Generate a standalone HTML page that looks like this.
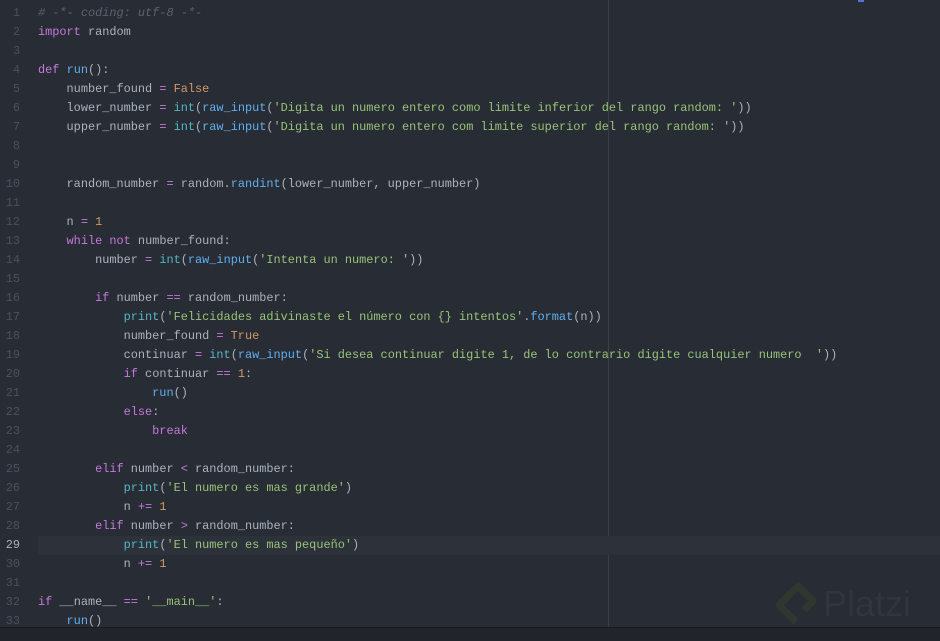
<!DOCTYPE html>
<html><head><meta charset="utf-8"><style>
html,body{margin:0;padding:0;width:940px;height:640px;overflow:hidden;background:#282c34}
.ed{position:absolute;left:0;top:4px;width:940px;font-family:"Liberation Mono",monospace;font-size:11.9px;color:#abb2bf}
.l{height:19px;line-height:19px;position:relative;white-space:pre}
.n{position:absolute;left:0;width:20px;text-align:right;color:#495162}
.c{position:absolute;left:38px}
.cur::before{content:"";position:absolute;left:38px;right:0;top:0;bottom:0;background:#2c313a}
.cur .n{color:#abb2bf}
.k{color:#c678dd}.f{color:#61afef}.b{color:#56b6c2}.s{color:#98c379}.o{color:#d19a66}.m{color:#5c6370;font-style:italic}.p{color:#c678dd}
.ruler{position:absolute;left:608px;top:0;width:1px;height:628px;background:#3b4048}
.bar{position:absolute;left:0;top:627px;width:940px;height:13px;background:#21252b;border-top:1px solid #181a1f}
.logo{position:absolute;color:#30353e;font-family:"Liberation Sans",sans-serif;font-size:36px}
</style></head><body>
<div class="ruler"></div>
<div style="position:absolute;left:858px;top:0;width:6px;height:2px;background:#4d78cc"></div>
<div class="ed">
<div class="l"><span class="n">1</span><span class="c m"># -*- coding: utf-8 -*-</span></div>
<div class="l"><span class="n">2</span><span class="c"><span class="k">import</span> random</span></div>
<div class="l"><span class="n">3</span></div>
<div class="l"><span class="n">4</span><span class="c"><span class="k">def</span> <span class="f">run</span>():</span></div>
<div class="l"><span class="n">5</span><span class="c">    number_found <span class="p">=</span> <span class="o">False</span></span></div>
<div class="l"><span class="n">6</span><span class="c">    lower_number <span class="p">=</span> <span class="b">int</span>(<span class="f">raw_input</span>(<span class="s">'Digita un numero entero como limite inferior del rango random: '</span>))</span></div>
<div class="l"><span class="n">7</span><span class="c">    upper_number <span class="p">=</span> <span class="b">int</span>(<span class="f">raw_input</span>(<span class="s">'Digita un numero entero com limite superior del rango random: '</span>))</span></div>
<div class="l"><span class="n">8</span></div>
<div class="l"><span class="n">9</span></div>
<div class="l"><span class="n">10</span><span class="c">    random_number <span class="p">=</span> random.<span class="f">randint</span>(lower_number, upper_number)</span></div>
<div class="l"><span class="n">11</span></div>
<div class="l"><span class="n">12</span><span class="c">    n <span class="p">=</span> <span class="o">1</span></span></div>
<div class="l"><span class="n">13</span><span class="c">    <span class="k">while</span> <span class="k">not</span> number_found:</span></div>
<div class="l"><span class="n">14</span><span class="c">        number <span class="p">=</span> <span class="b">int</span>(<span class="f">raw_input</span>(<span class="s">'Intenta un numero: '</span>))</span></div>
<div class="l"><span class="n">15</span></div>
<div class="l"><span class="n">16</span><span class="c">        <span class="k">if</span> number <span class="p">==</span> random_number:</span></div>
<div class="l"><span class="n">17</span><span class="c">            <span class="b">print</span>(<span class="s">'Felicidades adivinaste el número con {} intentos'</span>.<span class="f">format</span>(n))</span></div>
<div class="l"><span class="n">18</span><span class="c">            number_found <span class="p">=</span> <span class="o">True</span></span></div>
<div class="l"><span class="n">19</span><span class="c">            continuar <span class="p">=</span> <span class="b">int</span>(<span class="f">raw_input</span>(<span class="s">'Si desea continuar digite 1, de lo contrario digite cualquier numero  '</span>))</span></div>
<div class="l"><span class="n">20</span><span class="c">            <span class="k">if</span> continuar <span class="p">==</span> <span class="o">1</span>:</span></div>
<div class="l"><span class="n">21</span><span class="c">                <span class="f">run</span>()</span></div>
<div class="l"><span class="n">22</span><span class="c">            <span class="k">else</span>:</span></div>
<div class="l"><span class="n">23</span><span class="c">                <span class="k">break</span></span></div>
<div class="l"><span class="n">24</span></div>
<div class="l"><span class="n">25</span><span class="c">        <span class="k">elif</span> number <span class="p">&lt;</span> random_number:</span></div>
<div class="l"><span class="n">26</span><span class="c">            <span class="b">print</span>(<span class="s">'El numero es mas grande'</span>)</span></div>
<div class="l"><span class="n">27</span><span class="c">            n <span class="p">+=</span> <span class="o">1</span></span></div>
<div class="l"><span class="n">28</span><span class="c">        <span class="k">elif</span> number <span class="p">&gt;</span> random_number:</span></div>
<div class="l cur"><span class="n">29</span><span class="c">            <span class="b">print</span>(<span class="s">'El numero es mas pequeño'</span>)</span></div>
<div class="l"><span class="n">30</span><span class="c">            n <span class="p">+=</span> <span class="o">1</span></span></div>
<div class="l"><span class="n">31</span></div>
<div class="l"><span class="n">32</span><span class="c"><span class="k">if</span> __name__ <span class="p">==</span> <span class="s">'__main__'</span>:</span></div>
<div class="l"><span class="n">33</span><span class="c">    <span class="f">run</span>()</span></div>
</div>
<svg style="position:absolute;left:773px;top:580px" width="46" height="46" viewBox="0 0 46 46"><path d="M23 4 L40 21 L31 30 M23 42 L6 25 L23 8" fill="none" stroke="#30372f" stroke-width="7" stroke-linejoin="round"/></svg>
<div class="logo" style="left:823px;top:583px">Platzi</div>
<div class="bar"></div>
</body></html>
